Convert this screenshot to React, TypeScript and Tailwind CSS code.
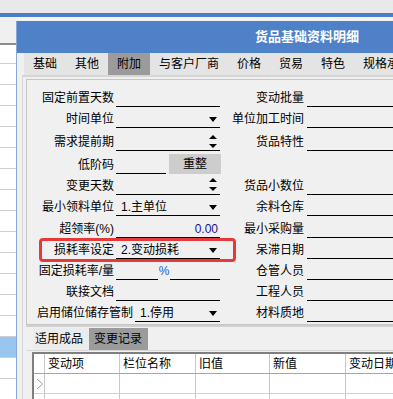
import React from "react";

function Arrow() {
  return (
    <svg width="8" height="5" viewBox="0 0 8 5" className="shrink-0">
      <path d="M0 0H8L4 5Z" fill="#000" />
    </svg>
  );
}

function Spin() {
  return (
    <svg width="8" height="14" viewBox="0 0 8 14" className="shrink-0">
      <path d="M0 4H8L4 0Z" fill="#000" />
      <path d="M0 9H8L4 13Z" fill="#000" />
    </svg>
  );
}

function Field({ className = "", children }: { className?: string; children?: React.ReactNode }) {
  return (
    <div className={`h-[17px] border-b border-black flex items-center leading-[16px] shrink-0 ${className}`}>
      {children}
    </div>
  );
}

function Label({ className = "w-[87px]", children }: { className?: string; children?: React.ReactNode }) {
  return <div className={`text-right leading-[16px] mb-[1px] whitespace-nowrap shrink-0 ${className}`}>{children}</div>;
}

function Right({ label }: { label?: string }) {
  if (!label) return null;
  return (
    <>
      <Label className="w-[84px]">{label}</Label>
      <Field className="ml-[3px] w-[140px]" />
    </>
  );
}

const tabs = ["基础", "其他", "附加", "与客户厂商", "价格", "贸易", "特色", "规格承认"];
const cols = [
  { t: "变动项", w: "w-[75px]" },
  { t: "栏位名称", w: "w-[76px]" },
  { t: "旧值", w: "w-[74px]" },
  { t: "新值", w: "w-[76px]" },
  { t: "变动日期", w: "w-[80px]" },
];

export default function App() {
  return (
    <div className="relative w-[393px] h-[399px] overflow-hidden bg-[#f3f3f3] text-[12px] text-black font-['Liberation_Sans','Noto_Sans_CJK_SC',sans-serif]">
      <div className="h-[13px] bg-[#e9e9e9]" />
      <div className="h-[4px] bg-[#4b7cc7]" />

      <div className="flex">
        {/* list behind the window */}
        <div className="w-[16px] shrink-0">
          <div className="h-[26px] bg-[#f0f0f0]" />
          <div className="h-[2px] bg-[#8c8c8c]" />
          <div className="h-[19px] bg-white border-b border-[#cfcfcf]" />
          {Array.from({ length: 13 }).map((_, i) => (
            <div key={i} className="h-[21px] bg-white border-b border-[#cfcfcf]" />
          ))}
          <div className="h-[21px] bg-[#99c6ee] border-b border-[#cfcfcf]" />
          <div className="h-[21px] bg-white border-b border-[#cfcfcf]" />
          <div className="h-[21px] bg-white border-b border-[#cfcfcf]" />
        </div>

        {/* window */}
        <div className="w-[600px] shrink-0 pt-[4px]">
          <div className="border-l border-[#86a8d8] bg-[#f0f0f0] h-[400px]">
            <div className="h-[32px] bg-[#4f81c8] pl-[238px] flex items-center text-white font-bold text-[13px] tracking-[0px]">
              货品基础资料明细
            </div>

            <div className="ml-[7px] h-[22px] bg-[#e4e4e4] flex">
              {tabs.map((t) => (
                <div
                  key={t}
                  className={`px-[9px] h-full flex items-center ${t === "附加" ? "bg-[#9b9b9b]" : ""}`}
                >
                  {t}
                </div>
              ))}
            </div>

            <div className="ml-[5px] border-t-2 border-l border-[#d6d6d6]">
              {/* group box */}
              <div className="mt-[2px] ml-[3px] border border-[#c6c6c6] pt-[7px] pb-[2px]">
                <div className="flex items-end h-[20px]">
                  <Label>固定前置天数</Label>
                  <Field className="ml-[2px] w-[104px]" />
                  <Right label="变动批量" />
                </div>
                <div className="flex items-end h-[21px]">
                  <Label>时间单位</Label>
                  <Field className="ml-[2px] w-[104px] justify-end pr-[3px]">
                    <Arrow />
                  </Field>
                  <Right label="单位加工时间" />
                </div>
                <div className="flex items-end h-[23px]">
                  <Label>需求提前期</Label>
                  <Field className="ml-[2px] w-[104px] justify-end items-start pr-[3px] pt-[1px]">
                    <Spin />
                  </Field>
                  <Right label="货品特性" />
                </div>
                <div className="flex items-end h-[23px]">
                  <Label>低阶码</Label>
                  <Field className="ml-[2px] w-[50px]" />
                  <div className="ml-[3px] w-[52px] h-[20px] bg-[#cdcdcd] flex items-center justify-center shrink-0">
                    重整
                  </div>
                </div>
                <div className="flex items-end h-[21px]">
                  <Label>变更天数</Label>
                  <Field className="ml-[2px] w-[104px] justify-end items-start pr-[3px]">
                    <Spin />
                  </Field>
                  <Right label="货品小数位" />
                </div>
                <div className="flex items-end h-[21px]">
                  <Label>最小领料单位</Label>
                  <Field className="ml-[2px] w-[104px] justify-between pl-[5px] pr-[3px]">
                    <span>1.主单位</span>
                    <Arrow />
                  </Field>
                  <Right label="余料仓库" />
                </div>
                <div className="flex items-end h-[22px]">
                  <Label>超领率(%)</Label>
                  <Field className="ml-[2px] w-[104px] justify-end pr-[2px] text-[#14148a]">0.00</Field>
                  <Right label="最小采购量" />
                </div>
                <div className="flex items-end h-[21px]">
                  <Label>损耗率设定</Label>
                  <Field className="ml-[2px] w-[104px] justify-between pl-[5px] pr-[3px]">
                    <span>2.变动损耗</span>
                    <Arrow />
                  </Field>
                  <Right label="呆滞日期" />
                </div>
                <div className="flex items-end h-[21px]">
                  <Label>固定损耗率/量</Label>
                  <Field className="ml-[2px] w-[42px]" />
                  <div className="w-[12px] text-center leading-[16px] mb-[1px] text-[#2a5bd0] shrink-0">%</div>
                  <Field className="w-[50px]" />
                  <Right label="仓管人员" />
                </div>
                <div className="flex items-end h-[21px]">
                  <Label>联接文档</Label>
                  <Field className="ml-[2px] w-[104px]" />
                  <Right label="工程人员" />
                </div>
                <div className="flex items-end h-[21px]">
                  <Label className="w-[106px]">启用储位储存管制</Label>
                  <Field className="ml-[2px] w-[85px] justify-between pl-[5px] pr-[3px]">
                    <span>1.停用</span>
                    <Arrow />
                  </Field>
                  <Right label="材料质地" />
                </div>
              </div>

              {/* lower tabs and grid */}
              <div className="ml-[3px] border-t-2 border-[#d0d0d0] pt-[1px]">
                <div className="h-[23px] pl-[7px] flex border-b border-[#d8d8d8]">
                  <div className="pl-[2px] pr-[6px] flex items-center bg-[#ececec]">适用成品</div>
                  <div className="pl-[5px] pr-[6px] flex items-center bg-[#9b9b9b]">变更记录</div>
                </div>
                <div className="mt-[1px] ml-[6px] border-l-2 border-t-2 border-[#7f7f7f] bg-white h-[60px]">
                  <div className="flex h-[20px] border-b border-[#a6a6a6]">
                    <div className="w-[11px] border-r border-[#c8c8c8] shrink-0" />
                    {cols.map((c) => (
                      <div key={c.t} className={`${c.w} border-r border-[#c8c8c8] pl-[3px] flex items-center shrink-0`}>
                        {c.t}
                      </div>
                    ))}
                  </div>
                  <div className="flex h-[20px] border-b border-[#d0d0d0]">
                    <div className="w-[11px] border-r border-[#c8c8c8] shrink-0 flex items-center pl-[2px]">
                      <svg width="8" height="12" viewBox="0 0 8 12">
                        <polyline points="1,1 6.5,6 1,11" fill="none" stroke="#9a9a9a" strokeWidth="1" />
                      </svg>
                    </div>
                    {cols.map((c) => (
                      <div key={c.t} className={`${c.w} border-r border-[#c8c8c8] shrink-0`} />
                    ))}
                  </div>
                  <div className="flex h-[20px]">
                    <div className="w-[11px] border-r border-[#c8c8c8] shrink-0" />
                    {cols.map((c) => (
                      <div key={c.t} className={`${c.w} border-r border-[#c8c8c8] shrink-0`} />
                    ))}
                  </div>
                </div>
              </div>
            </div>
          </div>
        </div>
      </div>

      {/* red highlight annotation */}
      <div className="absolute left-[39px] top-[238px] w-[197px] h-[24px] border-[3px] border-[#e63a3a] rounded-[4px]" />
    </div>
  );
}
